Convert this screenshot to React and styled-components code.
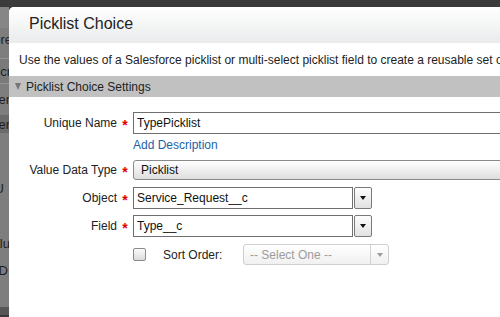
import React from "react";
import styled, { createGlobalStyle } from "styled-components";

const GlobalStyle = createGlobalStyle`
  html, body {
    margin: 0;
    padding: 0;
    background: #7d7d7d;
  }
  body {
    font-family: "Liberation Sans", Arial, sans-serif;
    font-size: 12px;
    color: #222;
  }
`;

const stripRows = [
  { h: 21, bg: "#868686" },
  { h: 22, bg: "#7e7e7e", text: "Store", cut: -3 },
  { h: 8, bg: "#7e7e7e" },
  { h: 1, bg: "#959595" },
  { h: 24, bg: "#7a7a7a", text: "Descr", cut: -2 },
  { h: 1, bg: "#959595" },
  { h: 31, bg: "#7e7e7e", text: "Ener", cut: -1 },
  { h: 18, bg: "#6b6b6b", text: "Ener", cut: -1 },
  { h: 45, bg: "#7e7e7e" },
  { h: 20, bg: "#7e7e7e", text: "U", cut: 5 },
  { h: 35, bg: "#7e7e7e" },
  { h: 20, bg: "#7e7e7e", text: "Valu", cut: -1 },
  { h: 7, bg: "#7e7e7e" },
  { h: 20, bg: "#7e7e7e", text: "D", cut: 1 },
  { h: 27, bg: "#7e7e7e" },
  { h: 8, bg: "#565656" },
];

function App() {
  return (
    <>
      <GlobalStyle />
      <Page>
        <TopBar />
        <Body>
          <Strip>
            {stripRows.map((r, i) => (
              <StripRow key={i} $h={r.h} $bg={r.bg}>
                {r.text && <StripText $cut={r.cut}>{r.text}</StripText>}
              </StripRow>
            ))}
          </Strip>
          <Modal>
            <Header>
              <Title>Picklist Choice</Title>
            </Header>
            <Intro>
              Use the values of a Salesforce picklist or multi-select picklist
              field to create a reusable set of choices
            </Intro>
            <Section>
              <Caret />
              <span>Picklist Choice Settings</span>
            </Section>
            <Form>
              <Row $h={22}>
                <Label>Unique Name</Label>
                <Req>*</Req>
                <TextInput $wide>TypePicklist</TextInput>
              </Row>
              <LinkRow>
                <Link>Add Description</Link>
              </LinkRow>
              <Row $h={20} $mt={8}>
                <Label>Value Data Type</Label>
                <Req>*</Req>
                <SelectBox>Picklist</SelectBox>
              </Row>
              <Row $h={22} $mt={7}>
                <Label>Object</Label>
                <Req>*</Req>
                <TextInput>Service_Request__c</TextInput>
                <DropButton>
                  <Arrow />
                </DropButton>
              </Row>
              <Row $h={22} $mt={6}>
                <Label>Field</Label>
                <Req>*</Req>
                <TextInput>Type__c</TextInput>
                <DropButton>
                  <Arrow />
                </DropButton>
              </Row>
              <Row $h={21} $mt={7}>
                <Label />
                <Req />
                <Checkbox />
                <SortLabel>Sort Order:</SortLabel>
                <DisabledSelect>
                  <span>-- Select One --</span>
                  <DisabledArrow>
                    <Arrow $muted />
                  </DisabledArrow>
                </DisabledSelect>
              </Row>
            </Form>
          </Modal>
        </Body>
      </Page>
    </>
  );
}

const Page = styled.div`
  width: 500px;
  height: 317px;
  overflow: hidden;
  display: flex;
  flex-direction: column;
`;

const TopBar = styled.div`
  height: 7px;
  flex-shrink: 0;
  background: #3b3b3b;
`;

const Body = styled.div`
  flex: 1;
  display: flex;
  min-height: 0;
  background: #3b3b3b;
`;

const Strip = styled.div`
  width: 9px;
  flex-shrink: 0;
  display: flex;
  flex-direction: column;
`;

const StripRow = styled.div`
  height: ${(p) => p.$h}px;
  flex-shrink: 0;
  background: ${(p) => p.$bg};
  display: flex;
  align-items: center;
  justify-content: flex-end;
  overflow: hidden;
`;

const StripText = styled.span`
  white-space: nowrap;
  font-size: 13px;
  color: #1e1e1e;
  margin-right: ${(p) => p.$cut}px;
`;

const Modal = styled.div`
  flex: 1;
  background: #fff;
  border-top-left-radius: 5px;
  overflow: hidden;
  display: flex;
  flex-direction: column;
`;

const Header = styled.div`
  height: 36px;
  flex-shrink: 0;
  display: flex;
  align-items: center;
  padding-left: 20px;
  background: linear-gradient(#ffffff, #e9ebec);
`;

const Title = styled.h2`
  margin: 0 0 2px;
  font-size: 16px;
  font-weight: normal;
  color: #222;
`;

const Intro = styled.p`
  margin: 0;
  height: 33px;
  flex-shrink: 0;
  padding-left: 10px;
  display: flex;
  align-items: center;
  white-space: nowrap;
  color: #222;
`;

const Section = styled.div`
  height: 21px;
  flex-shrink: 0;
  display: flex;
  align-items: center;
  gap: 5px;
  padding-left: 6px;
  background: #c1c1c1;
  color: #222;
`;

const Caret = styled.span`
  width: 0;
  height: 0;
  border-left: 3.5px solid transparent;
  border-right: 3.5px solid transparent;
  border-top: 7px solid #767676;
  margin-top: -1px;
`;

const Form = styled.div`
  padding-top: 15px;
  display: flex;
  flex-direction: column;
`;

const Row = styled.div`
  height: ${(p) => p.$h}px;
  margin-top: ${(p) => p.$mt || 0}px;
  display: flex;
  align-items: center;
  flex-shrink: 0;
`;

const Label = styled.span`
  width: 108px;
  flex-shrink: 0;
  text-align: right;
  color: #222;
`;

const Req = styled.span`
  width: 16px;
  flex-shrink: 0;
  text-align: center;
  color: #d00;
  font-size: 14px;
  font-weight: bold;
  line-height: 1;
  padding-top: 3px;
`;

const TextInput = styled.div`
  box-sizing: border-box;
  width: ${(p) => (p.$wide ? "400px" : "220px")};
  height: 100%;
  flex-shrink: 0;
  border: 1px solid #6f6f6f;
  padding-left: 3px;
  display: flex;
  align-items: center;
  color: #111;
`;

const LinkRow = styled.div`
  margin-top: 3px;
  height: 15px;
  padding-left: 124px;
  display: flex;
  align-items: center;
`;

const Link = styled.a`
  color: #1c5fa9;
  cursor: pointer;
`;

const SelectBox = styled.div`
  box-sizing: border-box;
  width: 400px;
  height: 100%;
  flex-shrink: 0;
  border: 1px solid #8a8a8a;
  border-radius: 3px;
  padding-left: 7px;
  display: flex;
  align-items: center;
  color: #111;
  background: linear-gradient(#ffffff, #dedede);
`;

const DropButton = styled.div`
  box-sizing: border-box;
  width: 18px;
  height: 100%;
  margin-left: 1px;
  flex-shrink: 0;
  border: 1px solid #7a7a7a;
  border-radius: 2px;
  display: flex;
  align-items: center;
  justify-content: center;
  background: linear-gradient(#fdfdfd, #e2e2e2);
`;

const Arrow = styled.span`
  width: 0;
  height: 0;
  border-left: 3.5px solid transparent;
  border-right: 3.5px solid transparent;
  border-top: 4px solid ${(p) => (p.$muted ? "#9a9a9a" : "#111")};
`;

const Checkbox = styled.span`
  box-sizing: border-box;
  width: 13px;
  height: 13px;
  flex-shrink: 0;
  border: 1px solid #8a8a8a;
  border-radius: 2px;
  background: linear-gradient(#fafafa, #dcdcdc);
`;

const SortLabel = styled.span`
  margin-left: 17px;
  width: 80px;
  color: #222;
`;

const DisabledSelect = styled.div`
  box-sizing: border-box;
  width: 146px;
  height: 100%;
  border: 1px solid #cfcfcf;
  border-radius: 3px;
  display: flex;
  align-items: center;
  justify-content: space-between;
  padding-left: 6px;
  color: #9c9c9c;
  background: linear-gradient(#ffffff, #f0f0f0);
`;

const DisabledArrow = styled.span`
  width: 17px;
  height: 100%;
  border-left: 1px solid #d2d2d2;
  display: flex;
  align-items: center;
  justify-content: center;
`;

export default App;
